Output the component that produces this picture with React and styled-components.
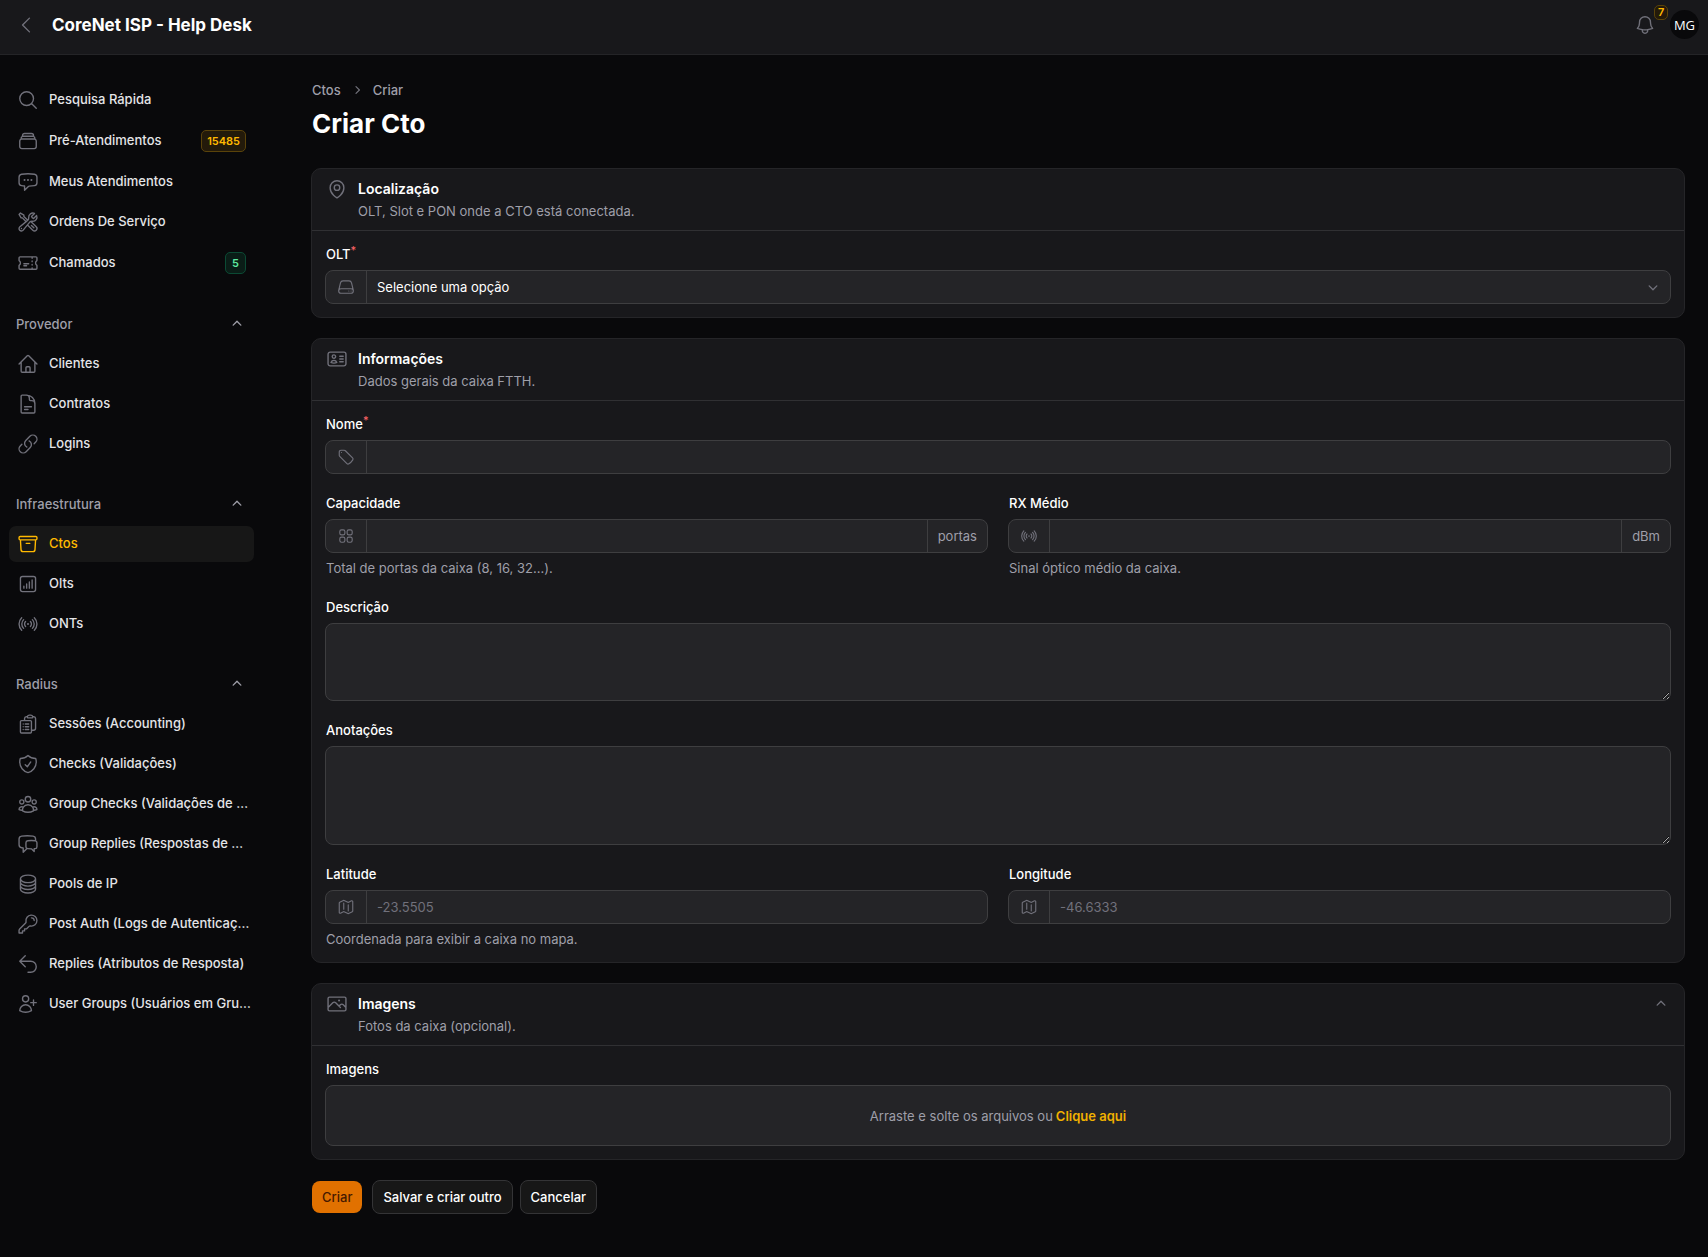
import React, { useState } from "react";
import styled, { createGlobalStyle, css } from "styled-components";
import {
  HiMiniChevronDown,
  HiMiniChevronRight,
  HiMiniChevronUp,
  HiOutlineArchiveBox,
  HiOutlineArrowUturnLeft,
  HiOutlineBell,
  HiOutlineChartBarSquare,
  HiOutlineChatBubbleLeftEllipsis,
  HiOutlineChatBubbleLeftRight,
  HiOutlineChevronLeft,
  HiOutlineCircleStack,
  HiOutlineClipboardDocumentList,
  HiOutlineDocumentText,
  HiOutlineHome,
  HiOutlineIdentification,
  HiOutlineKey,
  HiOutlineLink,
  HiOutlineMagnifyingGlass,
  HiOutlineMap,
  HiOutlineMapPin,
  HiOutlinePhoto,
  HiOutlineRectangleStack,
  HiOutlineServer,
  HiOutlineShieldCheck,
  HiOutlineSignal,
  HiOutlineSquares2X2,
  HiOutlineTag,
  HiOutlineTicket,
  HiOutlineUserGroup,
  HiOutlineUserPlus,
  HiOutlineWrenchScrewdriver,
} from "react-icons/hi2";

const GlobalStyle = createGlobalStyle`
  *, *::before, *::after {
    box-sizing: border-box;
  }
  html {
    color-scheme: dark;
  }
  body {
    margin: 0;
    background: #09090b;
    color: #fff;
    font-family: Inter, "Liberation Sans", sans-serif;
    font-size: 13px;
    line-height: 18px;
  }
  button, input, select, textarea {
    font: inherit;
    color: inherit;
  }
  svg {
    display: block;
    flex-shrink: 0;
  }
`;

const tones = {
  amber: css`
    color: #ffb900;
    background: #231a0a;
    border-color: #5a430a;
  `,
  green: css`
    color: #5ee9a0;
    background: #0a1d17;
    border-color: #0b4a34;
  `,
};

const Topbar = styled.header`
  display: flex;
  align-items: center;
  height: 55px;
  padding: 0 9px 5px 15px;
  background: #18181b;
  border-bottom: 1px solid #242427;
`;

const IconButton = styled.button`
  position: relative;
  display: flex;
  padding: 0;
  border: 0;
  background: none;
  color: #71717b;
  cursor: pointer;
`;

const CollapseButton = styled(IconButton)`
  padding: 2px 0;
`;

const Brand = styled.a`
  margin-left: 15px;
  color: #fff;
  font-size: 17px;
  font-weight: 700;
  line-height: 24px;
  text-decoration: none;
`;

const TopbarEnd = styled.div`
  display: flex;
  align-items: center;
  gap: 14px;
  margin-left: auto;
`;

const Badge = styled.span`
  min-width: 21px;
  padding: 1px 5px;
  border: 1px solid;
  border-radius: 5px;
  font-size: 11px;
  font-weight: 600;
  line-height: 18px;
  text-align: center;
  ${(props) => tones[props.$tone]}
`;

const BellBadge = styled(Badge)`
  position: absolute;
  top: -9px;
  left: 20px;
  min-width: 14px;
  padding: 0 3px;
  line-height: 13px;
`;

const Avatar = styled.button`
  width: 29px;
  height: 29px;
  padding: 0;
  border: 0;
  border-radius: 50%;
  background: #09090b;
  color: #fff;
  font-family: "Open Sans", sans-serif;
  font-size: 13px;
`;

const Layout = styled.div`
  display: grid;
  grid-template-columns: 288px minmax(0, 1fr);
`;

const Sidebar = styled.nav`
  display: flex;
  flex-direction: column;
  gap: 25px;
  padding: 27px 34px 27px 9px;
`;

const NavList = styled.ul`
  display: flex;
  flex-direction: column;
  gap: 4px;
  margin: 0;
  padding: 0;
  list-style: none;
`;

const NavLink = styled.a`
  display: flex;
  align-items: center;
  gap: 10px;
  height: ${(props) => (props.$badge ? "38px" : "36px")};
  padding: ${(props) => (props.$badge ? "0 8px" : "0 2px 0 8px")};
  border-radius: 7px;
  background: ${(props) => (props.$active ? "#171717" : "transparent")};
  color: ${(props) => (props.$active ? "#ffb900" : "#e4e4e7")};
  font-weight: 500;
  text-decoration: none;

  svg {
    color: ${(props) => (props.$active ? "#ffb900" : "#71717b")};
  }
`;

const NavText = styled.span`
  flex: 1;
  padding-bottom: 2px;
  overflow: hidden;
  text-overflow: ellipsis;
  white-space: nowrap;
`;

const GroupHeading = styled.button`
  display: flex;
  align-items: center;
  justify-content: space-between;
  width: 100%;
  height: 34px;
  margin-bottom: 5px;
  padding: 0 8px 0 7px;
  border: 0;
  background: none;
  color: #9f9fa9;
  font-weight: 500;
  cursor: pointer;
`;

const Main = styled.main`
  padding: 26px 23px 43px;
`;

const Breadcrumbs = styled.nav`
  display: flex;
  align-items: center;
  gap: 8px;
  padding-left: 1px;
  color: #71717b;

  a {
    color: #9f9fa9;
    font-weight: 500;
    text-decoration: none;
  }
`;

const PageTitle = styled.h1`
  margin: 8px 0 28px;
  padding-left: 1px;
  font-size: 26px;
  font-weight: 700;
  line-height: 33px;
`;

const Form = styled.form`
  display: flex;
  flex-direction: column;
  gap: 20px;
`;

const Card = styled.section`
  border: 1px solid #252528;
  border-radius: 10px;
  background: #18181b;
`;

const CardHeader = styled.header`
  display: flex;
  align-items: flex-start;
  gap: 10px;
  padding: 9px 14px 10px;

  svg {
    color: #71717b;
  }
`;

const CardHeading = styled.div`
  display: flex;
  flex: 1;
  flex-direction: column;
  gap: 3px;
  padding-top: 1px;
`;

const CardTitle = styled.h2`
  margin: 0;
  font-size: 14px;
  font-weight: 600;
  line-height: 20px;
`;

const Muted = styled.p`
  margin: 0;
  color: #9f9fa9;
`;

const CardBody = styled.div`
  display: grid;
  grid-template-columns: repeat(2, minmax(0, 1fr));
  gap: 20px;
  padding: 14px 13px 13px;
  border-top: 1px solid #303033;
`;

const FieldBox = styled.div`
  display: flex;
  flex-direction: column;
  gap: 7px;
  grid-column: ${(props) => (props.$half ? "auto" : "1 / -1")};
`;

const Label = styled.label`
  align-self: flex-start;
  padding-left: 1px;
  font-weight: 500;

  sup {
    color: #ff6467;
    line-height: 0;
  }
`;

const Help = styled(Muted)`
  padding: 0 0 2px 1px;
  line-height: 16px;
`;

const surface = css`
  border: 1px solid #3e3e40;
  border-radius: 8px;
  background: #242427;
`;

const InputShell = styled.div`
  display: flex;
  position: relative;
  height: 34px;
  ${surface}
`;

const Affix = styled.span`
  display: flex;
  align-items: center;
  padding: ${(props) => (props.$end ? "0 10px" : "0 11px")};
  color: ${(props) => (props.$end ? "#9f9fa9" : "#71717b")};
  border: 0 solid #3e3e40;
  border-width: ${(props) => (props.$end ? "0 0 0 1px" : "0 1px 0 0")};
`;

const TextInput = styled.input`
  flex: 1;
  min-width: 0;
  padding: 0 10px;
  border: 0;
  outline: 0;
  background: none;

  &::placeholder {
    color: #71717b;
    opacity: 1;
  }
`;

const Select = styled.select`
  flex: 1;
  min-width: 0;
  padding: 0 32px 0 10px;
  border: 0;
  outline: 0;
  appearance: none;
  background: none;
`;

const SelectArrow = styled(HiMiniChevronDown)`
  position: absolute;
  top: 7px;
  right: 8px;
  color: #71717b;
  pointer-events: none;
`;

const TextArea = styled.textarea`
  display: block;
  width: 100%;
  height: ${(props) => (props.$tall ? "99px" : "78px")};
  padding: 7px 10px;
  outline: 0;
  resize: vertical;
  ${surface}
`;

const DropZone = styled.label`
  display: flex;
  align-items: center;
  justify-content: center;
  gap: 3px;
  height: 61px;
  color: #9f9fa9;
  cursor: pointer;
  ${surface}

  strong {
    color: #f0b100;
    font-weight: 600;
  }
`;

const Actions = styled.div`
  display: flex;
  align-items: center;
  gap: 7px;
`;

const Button = styled.button`
  height: 34px;
  padding: 0 10px;
  border: 1px solid #343436;
  border-radius: 8px;
  background: #171717;
  color: #fff;
  font-weight: 500;
  cursor: pointer;
`;

const PrimaryButton = styled(Button)`
  height: 32px;
  margin: 0 3px 0 1px;
  border: 0;
  background: #e17100;
  color: #461901;
`;

const mainLinks = [
  { text: "Pesquisa Rápida", icon: HiOutlineMagnifyingGlass },
  { text: "Pré-Atendimentos", icon: HiOutlineRectangleStack, badge: "15485", tone: "amber" },
  { text: "Meus Atendimentos", icon: HiOutlineChatBubbleLeftEllipsis },
  { text: "Ordens De Serviço", icon: HiOutlineWrenchScrewdriver },
  { text: "Chamados", icon: HiOutlineTicket, badge: "5", tone: "green" },
];

const groups = [
  {
    title: "Provedor",
    links: [
      { text: "Clientes", icon: HiOutlineHome },
      { text: "Contratos", icon: HiOutlineDocumentText },
      { text: "Logins", icon: HiOutlineLink },
    ],
  },
  {
    title: "Infraestrutura",
    links: [
      { text: "Ctos", icon: HiOutlineArchiveBox, active: true },
      { text: "Olts", icon: HiOutlineChartBarSquare },
      { text: "ONTs", icon: HiOutlineSignal },
    ],
  },
  {
    title: "Radius",
    links: [
      { text: "Sessões (Accounting)", icon: HiOutlineClipboardDocumentList },
      { text: "Checks (Validações)", icon: HiOutlineShieldCheck },
      { text: "Group Checks (Validações de Grupo)", icon: HiOutlineUserGroup },
      { text: "Group Replies (Respostas de Grupo)", icon: HiOutlineChatBubbleLeftRight },
      { text: "Pools de IP", icon: HiOutlineCircleStack },
      { text: "Post Auth (Logs de Autenticação)", icon: HiOutlineKey },
      { text: "Replies (Atributos de Resposta)", icon: HiOutlineArrowUturnLeft },
      { text: "User Groups (Usuários em Grupos)", icon: HiOutlineUserPlus },
    ],
  },
];

function NavLinks({ links }) {
  return (
    <NavList>
      {links.map(({ text, icon: Icon, badge, tone, active }) => (
        <li key={text}>
          <NavLink
            href="#"
            $active={active}
            $badge={badge}
            aria-current={active ? "page" : undefined}
          >
            <Icon size={22} />
            <NavText>{text}</NavText>
            {badge && <Badge $tone={tone}>{badge}</Badge>}
          </NavLink>
        </li>
      ))}
    </NavList>
  );
}

function NavGroup({ title, links }) {
  const [open, setOpen] = useState(true);

  return (
    <div>
      <GroupHeading type="button" aria-expanded={open} onClick={() => setOpen((prev) => !prev)}>
        {title}
        {open ? <HiMiniChevronUp size={18} /> : <HiMiniChevronDown size={18} />}
      </GroupHeading>
      {open && <NavLinks links={links} />}
    </div>
  );
}

function Section({ icon: Icon, title, description, collapsible, children }) {
  const [open, setOpen] = useState(true);

  return (
    <Card>
      <CardHeader>
        <Icon size={22} />
        <CardHeading>
          <CardTitle>{title}</CardTitle>
          <Muted>{description}</Muted>
        </CardHeading>
        {collapsible && (
          <CollapseButton
            type="button"
            aria-label="Recolher"
            aria-expanded={open}
            onClick={() => setOpen((prev) => !prev)}
          >
            <HiMiniChevronUp size={18} />
          </CollapseButton>
        )}
      </CardHeader>
      {open && <CardBody>{children}</CardBody>}
    </Card>
  );
}

function Field({ id, label, required, help, half, children }) {
  return (
    <FieldBox $half={half}>
      <Label htmlFor={id}>
        {label}
        {required && <sup>*</sup>}
      </Label>
      {children}
      {help && <Help>{help}</Help>}
    </FieldBox>
  );
}

function InputField({ id, icon: Icon, suffix, placeholder, ...field }) {
  return (
    <Field id={id} {...field}>
      <InputShell>
        <Affix>
          <Icon size={18} />
        </Affix>
        <TextInput id={id} type="text" placeholder={placeholder} />
        {suffix && <Affix $end>{suffix}</Affix>}
      </InputShell>
    </Field>
  );
}

function App() {
  return (
    <>
      <GlobalStyle />
      <Topbar>
        <IconButton type="button" aria-label="Recolher menu">
          <HiOutlineChevronLeft size={22} />
        </IconButton>
        <Brand href="#">CoreNet ISP - Help Desk</Brand>
        <TopbarEnd>
          <IconButton type="button" aria-label="Notificações">
            <HiOutlineBell size={22} />
            <BellBadge $tone="amber">7</BellBadge>
          </IconButton>
          <Avatar type="button">MG</Avatar>
        </TopbarEnd>
      </Topbar>
      <Layout>
        <Sidebar>
          <NavLinks links={mainLinks} />
          {groups.map((group) => (
            <NavGroup key={group.title} {...group} />
          ))}
        </Sidebar>
        <Main>
          <Breadcrumbs>
            <a href="#">Ctos</a>
            <HiMiniChevronRight size={16} />
            <a href="#">Criar</a>
          </Breadcrumbs>
          <PageTitle>Criar Cto</PageTitle>
          <Form onSubmit={(e) => e.preventDefault()}>
            <Section
              icon={HiOutlineMapPin}
              title="Localização"
              description="OLT, Slot e PON onde a CTO está conectada."
            >
              <Field id="olt" label="OLT" required>
                <InputShell>
                  <Affix>
                    <HiOutlineServer size={18} />
                  </Affix>
                  <Select id="olt">
                    <option>Selecione uma opção</option>
                  </Select>
                  <SelectArrow size={18} />
                </InputShell>
              </Field>
            </Section>
            <Section
              icon={HiOutlineIdentification}
              title="Informações"
              description="Dados gerais da caixa FTTH."
            >
              <InputField id="nome" label="Nome" icon={HiOutlineTag} required />
              <InputField
                id="capacidade"
                label="Capacidade"
                icon={HiOutlineSquares2X2}
                suffix="portas"
                help="Total de portas da caixa (8, 16, 32...)."
                half
              />
              <InputField
                id="rx"
                label="RX Médio"
                icon={HiOutlineSignal}
                suffix="dBm"
                help="Sinal óptico médio da caixa."
                half
              />
              <Field id="descricao" label="Descrição">
                <TextArea id="descricao" />
              </Field>
              <Field id="anotacoes" label="Anotações">
                <TextArea id="anotacoes" $tall />
              </Field>
              <InputField
                id="latitude"
                label="Latitude"
                icon={HiOutlineMap}
                placeholder="-23.5505"
                help="Coordenada para exibir a caixa no mapa."
                half
              />
              <InputField
                id="longitude"
                label="Longitude"
                icon={HiOutlineMap}
                placeholder="-46.6333"
                half
              />
            </Section>
            <Section
              icon={HiOutlinePhoto}
              title="Imagens"
              description="Fotos da caixa (opcional)."
              collapsible
            >
              <Field id="imagens" label="Imagens">
                <DropZone>
                  <input id="imagens" type="file" multiple hidden />
                  Arraste e solte os arquivos ou <strong>Clique aqui</strong>
                </DropZone>
              </Field>
            </Section>
            <Actions>
              <PrimaryButton type="submit">Criar</PrimaryButton>
              <Button type="button">Salvar e criar outro</Button>
              <Button type="button">Cancelar</Button>
            </Actions>
          </Form>
        </Main>
      </Layout>
    </>
  );
}

export default App;
